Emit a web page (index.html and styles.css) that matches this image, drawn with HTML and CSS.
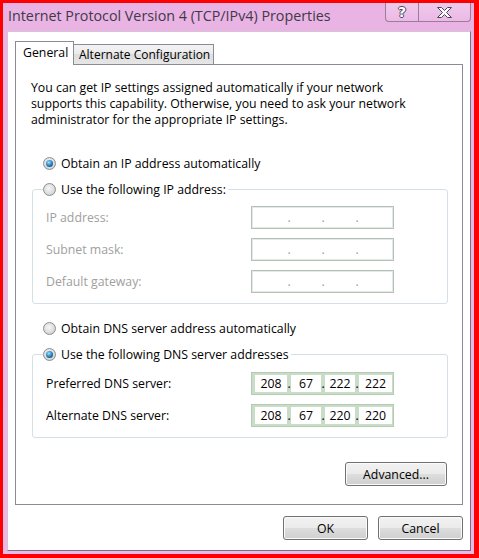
FILE: index.html
```html
<!DOCTYPE html>
<html lang="en">
<head>
<meta charset="utf-8">
<title>Internet Protocol Version 4 (TCP/IPv4) Properties</title>
<link rel="stylesheet" href="styles.css">
</head>
<body>
<div class="window">
  <div class="titlebar">
    <span class="title">Internet Protocol Version 4 (TCP/IPv4) Properties</span>
    <div class="caption-btns">
      <div class="cbtn help"><span class="qmark">?</span></div>
      <div class="cbtn close">
        <svg width="17" height="13" viewBox="0 0 17 13"><path d="M1.5 1.5 H5.5 L8.5 4.5 L11.5 1.5 H15.5 L10.5 6.5 L15.5 11.5 H11.5 L8.5 8.5 L5.5 11.5 H1.5 L6.5 6.5 Z" fill="#ffffff" stroke="#4a4658" stroke-width="1" stroke-linejoin="round"/></svg>
      </div>
    </div>
  </div>
  <div class="client">
    <div class="tabs">
      <div class="tab active">General</div>
      <div class="tab">Alternate Configuration</div>
    </div>
    <div class="panel">
      <p class="intro">You can get IP settings assigned automatically if your network<br>supports this capability. Otherwise, you need to ask your network<br>administrator for the appropriate IP settings.</p>

      <div class="radio-row r1"><span class="radio on"></span><span>Obtain an IP address automatically</span></div>

      <fieldset class="group g1">
        <legend class="radio-row"><span class="radio"></span><span>Use the following IP address:</span></legend>
        <div class="field-row first disabled">
          <span class="label">IP address:</span>
          <span class="ipbox off"><span class="seg s1"></span><span class="dot">.</span><span class="seg s2"></span><span class="dot">.</span><span class="seg s3"></span><span class="dot">.</span><span class="seg s4"></span></span>
        </div>
        <div class="field-row disabled">
          <span class="label">Subnet mask:</span>
          <span class="ipbox off"><span class="seg s1"></span><span class="dot">.</span><span class="seg s2"></span><span class="dot">.</span><span class="seg s3"></span><span class="dot">.</span><span class="seg s4"></span></span>
        </div>
        <div class="field-row disabled">
          <span class="label">Default gateway:</span>
          <span class="ipbox off"><span class="seg s1"></span><span class="dot">.</span><span class="seg s2"></span><span class="dot">.</span><span class="seg s3"></span><span class="dot">.</span><span class="seg s4"></span></span>
        </div>
      </fieldset>

      <div class="radio-row r3"><span class="radio"></span><span>Obtain DNS server address automatically</span></div>

      <fieldset class="group g2">
        <legend class="radio-row"><span class="radio on"></span><span>Use the following DNS server addresses</span></legend>
        <div class="field-row first">
          <span class="label">Preferred DNS server:</span>
          <span class="ipbox on"><span class="seg s1">208</span><span class="dot">.</span><span class="seg s2">67</span><span class="dot">.</span><span class="seg s3">222</span><span class="dot">.</span><span class="seg s4">222</span></span>
        </div>
        <div class="field-row">
          <span class="label">Alternate DNS server:</span>
          <span class="ipbox on"><span class="seg s1">208</span><span class="dot">.</span><span class="seg s2">67</span><span class="dot">.</span><span class="seg s3">220</span><span class="dot">.</span><span class="seg s4">220</span></span>
        </div>
      </fieldset>

      <div class="adv-row"><button class="btn adv" type="button">Advanced...</button></div>
    </div>
    <div class="footer">
      <button class="btn ok" type="button">OK</button>
      <button class="btn cancel" type="button">Cancel</button>
    </div>
  </div>
</div>
</body>
</html>
```

FILE: styles.css
```css
* { box-sizing: border-box; }

html, body {
  margin: 0;
  height: 558px;
}

body {
  background: #ff0000;
  padding: 3px 5px 4px 3px;
  font-family: "Open Sans", "Noto Sans", "Liberation Sans", sans-serif;
  font-size: 12.3px;
  color: #000;
  overflow: hidden;
}

.window {
  height: 551px;
  display: flex;
  flex-direction: column;
  padding: 0 3px 3px 4px;
  background: linear-gradient(#eab2e4, #e8b5e4 40px, #eab9e6);
}

.titlebar {
  height: 28px;
  flex: none;
  display: flex;
  justify-content: space-between;
  align-items: flex-start;
}

.title {
  margin-top: 3px;
  padding-left: 1px;
  font-size: 14.3px;
  line-height: 20px;
  color: #3e3a48;
  white-space: nowrap;
}

.caption-btns {
  display: flex;
  height: 19px;
}

.cbtn {
  height: 19px;
  border: 1px solid #9a7e98;
  border-top: none;
  background: linear-gradient(rgba(255,255,255,0.30), rgba(255,255,255,0.08));
  display: flex;
  align-items: center;
  justify-content: center;
}

.cbtn.help {
  width: 33px;
  border-right: none;
  border-bottom-left-radius: 4px;
}

.cbtn.close {
  width: 53px;
  border-bottom-right-radius: 4px;
}

.qmark {
  font-family: "DejaVu Sans", sans-serif;
  font-weight: bold;
  font-size: 14px;
  line-height: 16px;
  color: #ffffff;
  text-shadow: 1px 0 0 #4a4658, -1px 0 0 #4a4658, 0 1px 0 #4a4658, 0 -1px 0 #4a4658;
}

.client {
  flex: 1;
  background: #ffffff;
  border: 1px solid #7c6e80;
  border-left-color: #d8c2d6;
  border-top-color: #d8c2d6;
  padding: 9px 7px 0 7px;
  display: flex;
  flex-direction: column;
}

.tabs {
  display: flex;
  align-items: flex-end;
  height: 24px;
  margin-bottom: -1px;
}

.tab {
  line-height: 19px;
  white-space: nowrap;
}

.tab.active {
  position: relative;
  z-index: 1;
  height: 24px;
  width: 59px;
  padding-left: 7px;
  padding-top: 1px;
  background: #ffffff;
  border: 1px solid #898c95;
  border-bottom: none;
}

.tab:not(.active) {
  height: 21px;
  width: 140px;
  padding-left: 5px;
  border: 1px solid #898c95;
  border-left: none;
  background: linear-gradient(#f3f3f3, #ebebeb 50%, #dedede 50%, #e6e6e6);
}

.tab:not(.active) { font-size: 12px; }

.panel {
  flex: none;
  border: 1px solid #898c95;
  padding: 15px 14px 18px 15px;
}

.intro {
  margin: 0;
  line-height: 16px;
  white-space: nowrap;
}

.radio-row {
  display: flex;
  align-items: center;
  gap: 5px;
  height: 20px;
  white-space: nowrap;
}

.panel > .radio-row {
  margin-left: 12px;
}

.r1 { margin-top: 25px; }
.r3 { margin-top: 14px; }

.radio {
  width: 13px;
  height: 13px;
  flex: none;
  border-radius: 50%;
  border: 1px solid #8c8e90;
  background: radial-gradient(circle at 45% 40%, #f6f6f6 0%, #e2e2e2 45%, #c4c4c4 100%);
  display: flex;
  align-items: center;
  justify-content: center;
}

.radio.on::after {
  content: "";
  width: 7px;
  height: 7px;
  border-radius: 50%;
  background: radial-gradient(circle at 40% 35%, #a8e2ff 0%, #3a95cf 40%, #0f4f80 80%, #0a3a60 100%);
}

.group {
  margin: 6px 0 0 1px;
  padding: 0 10px 10px 10px;
  border: 1px solid #d5dfe5;
  border-radius: 3px;
  min-width: 0;
}

.group legend {
  padding: 0 2px 0 0;
}

.field-row {
  display: flex;
  align-items: center;
  height: 23px;
  margin-top: 9px;
  padding-left: 3px;
}

.g1 .field-row.first { margin-top: 7px; }
.g2 .field-row.first { margin-top: 8px; }

.label {
  width: 205px;
  flex: none;
  white-space: nowrap;
}

.disabled .label {
  color: #a0a0a0;
}

.ipbox {
  display: flex;
  width: 143px;
  height: 23px;
  padding: 2px 1px 2px 3px;
}

.ipbox.on {
  border: 1px solid #b3cbb3;
  background: #c8dcc8;
}

.ipbox.off {
  border: 1px solid #b5c1b8;
  box-shadow: inset 0 0 0 1px #e3e9e4;
  background: #ffffff;
}

.seg {
  height: 17px;
  line-height: 17px;
  text-align: center;
}

.ipbox.on .seg { background: #ffffff; }

.s1 { width: 32px; }
.s2 { width: 30px; }
.s3 { width: 30px; }
.s4 { width: 33px; }

.dot {
  width: 4px;
  line-height: 17px;
  text-align: center;
}

.ipbox.off .dot {
  color: #9a9a9a;
}

.adv-row {
  display: flex;
  justify-content: flex-end;
  margin-top: 24px;
  padding-right: 1px;
}

.btn {
  font: inherit;
  color: #000;
  height: 24px;
  width: 85px;
  padding: 0;
  border: 1px solid #707070;
  border-radius: 3px;
  background: linear-gradient(#f2f2f2 0%, #ebebeb 48%, #dddddd 52%, #cfcfcf 100%);
  box-shadow: inset 0 0 0 1px #fbfbfb;
}

.btn.adv { width: 102px; }

.footer {
  display: flex;
  justify-content: flex-end;
  gap: 10px;
  margin-top: 11px;
}
```
